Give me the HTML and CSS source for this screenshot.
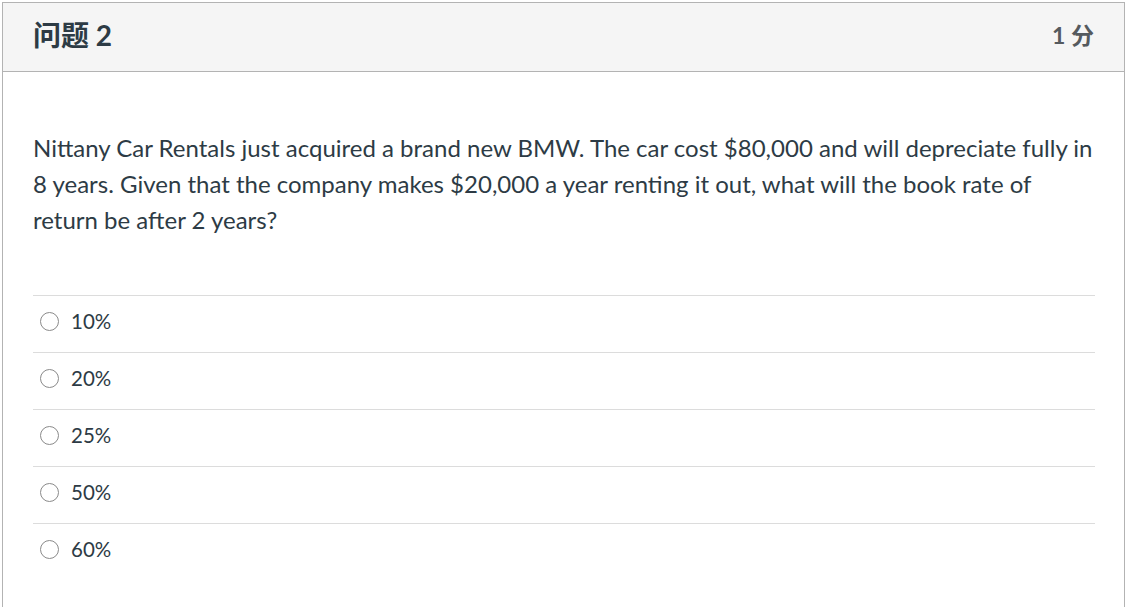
FILE: index.html
```html
<!DOCTYPE html>
<html lang="zh">
<head>
<meta charset="utf-8">
<title>问题 2</title>
<link rel="stylesheet" href="styles.css">
</head>
<body>
<div class="question">
  <div class="q-header">
    <h2 class="q-title">问题 2</h2>
    <div class="q-points">1 分</div>
  </div>
  <div class="q-body">
    <p class="q-text">Nittany Car Rentals just acquired a brand new BMW. The car cost $80,000 and will depreciate fully in 8 years. Given that the company makes $20,000 a year renting it out, what will the book rate of return be after 2 years?</p>
    <div class="answers">
      <label class="answer"><span class="radio"></span><span class="answer-text">10%</span></label>
      <label class="answer"><span class="radio"></span><span class="answer-text">20%</span></label>
      <label class="answer"><span class="radio"></span><span class="answer-text">25%</span></label>
      <label class="answer"><span class="radio"></span><span class="answer-text">50%</span></label>
      <label class="answer"><span class="radio"></span><span class="answer-text">60%</span></label>
    </div>
  </div>
</div>
</body>
</html>
```

FILE: styles.css
```css
html, body {
  margin: 0;
  padding: 0;
  background: #ffffff;
}
body {
  padding: 2px 0 0 2px;
  font-family: Lato, "Noto Sans CJK SC", sans-serif;
  color: #2d3b45;
}
.question {
  width: 1123px;
  border: 1px solid #b3b3b3;
  border-bottom: none;
  height: 620px;
  box-sizing: border-box;
}
.q-header {
  display: flex;
  justify-content: space-between;
  align-items: center;
  height: 68px;
  box-sizing: border-box;
  background: #f5f5f5;
  border-bottom: 1px solid #b3b3b3;
  padding: 0 30px 6px 30px;
  height: 69px;
}
.q-title {
  margin: 0;
  font-family: Lato, "Noto Sans CJK SC", sans-serif;
  font-weight: 700;
  font-size: 28px;
  color: #2d3b45;
}
.q-points {
  font-family: Lato, "Noto Sans CJK SC", sans-serif;
  font-weight: 700;
  font-size: 23px;
  color: #555a5e;
}
.q-body {
  padding: 58px 29px 0 30px;
}
.q-text {
  margin: 0 0 57px 0;
  font-size: 24px;
  line-height: 36px;
}
.answers {
  display: flex;
  flex-direction: column;
}
.answer {
  display: flex;
  align-items: center;
  border-top: 1px solid #dcdcdc;
  padding-left: 7px;
  padding-bottom: 6px;
  box-sizing: border-box;
  height: 57px;
}
.radio {
  width: 17px;
  height: 17px;
  border: 1px solid #8a8a8a;
  border-radius: 50%;
  background: #fff;
  margin-right: 12px;
  flex: none;
}
.answer-text {
  font-size: 20.5px;
  color: #2d3b45;
}
```
